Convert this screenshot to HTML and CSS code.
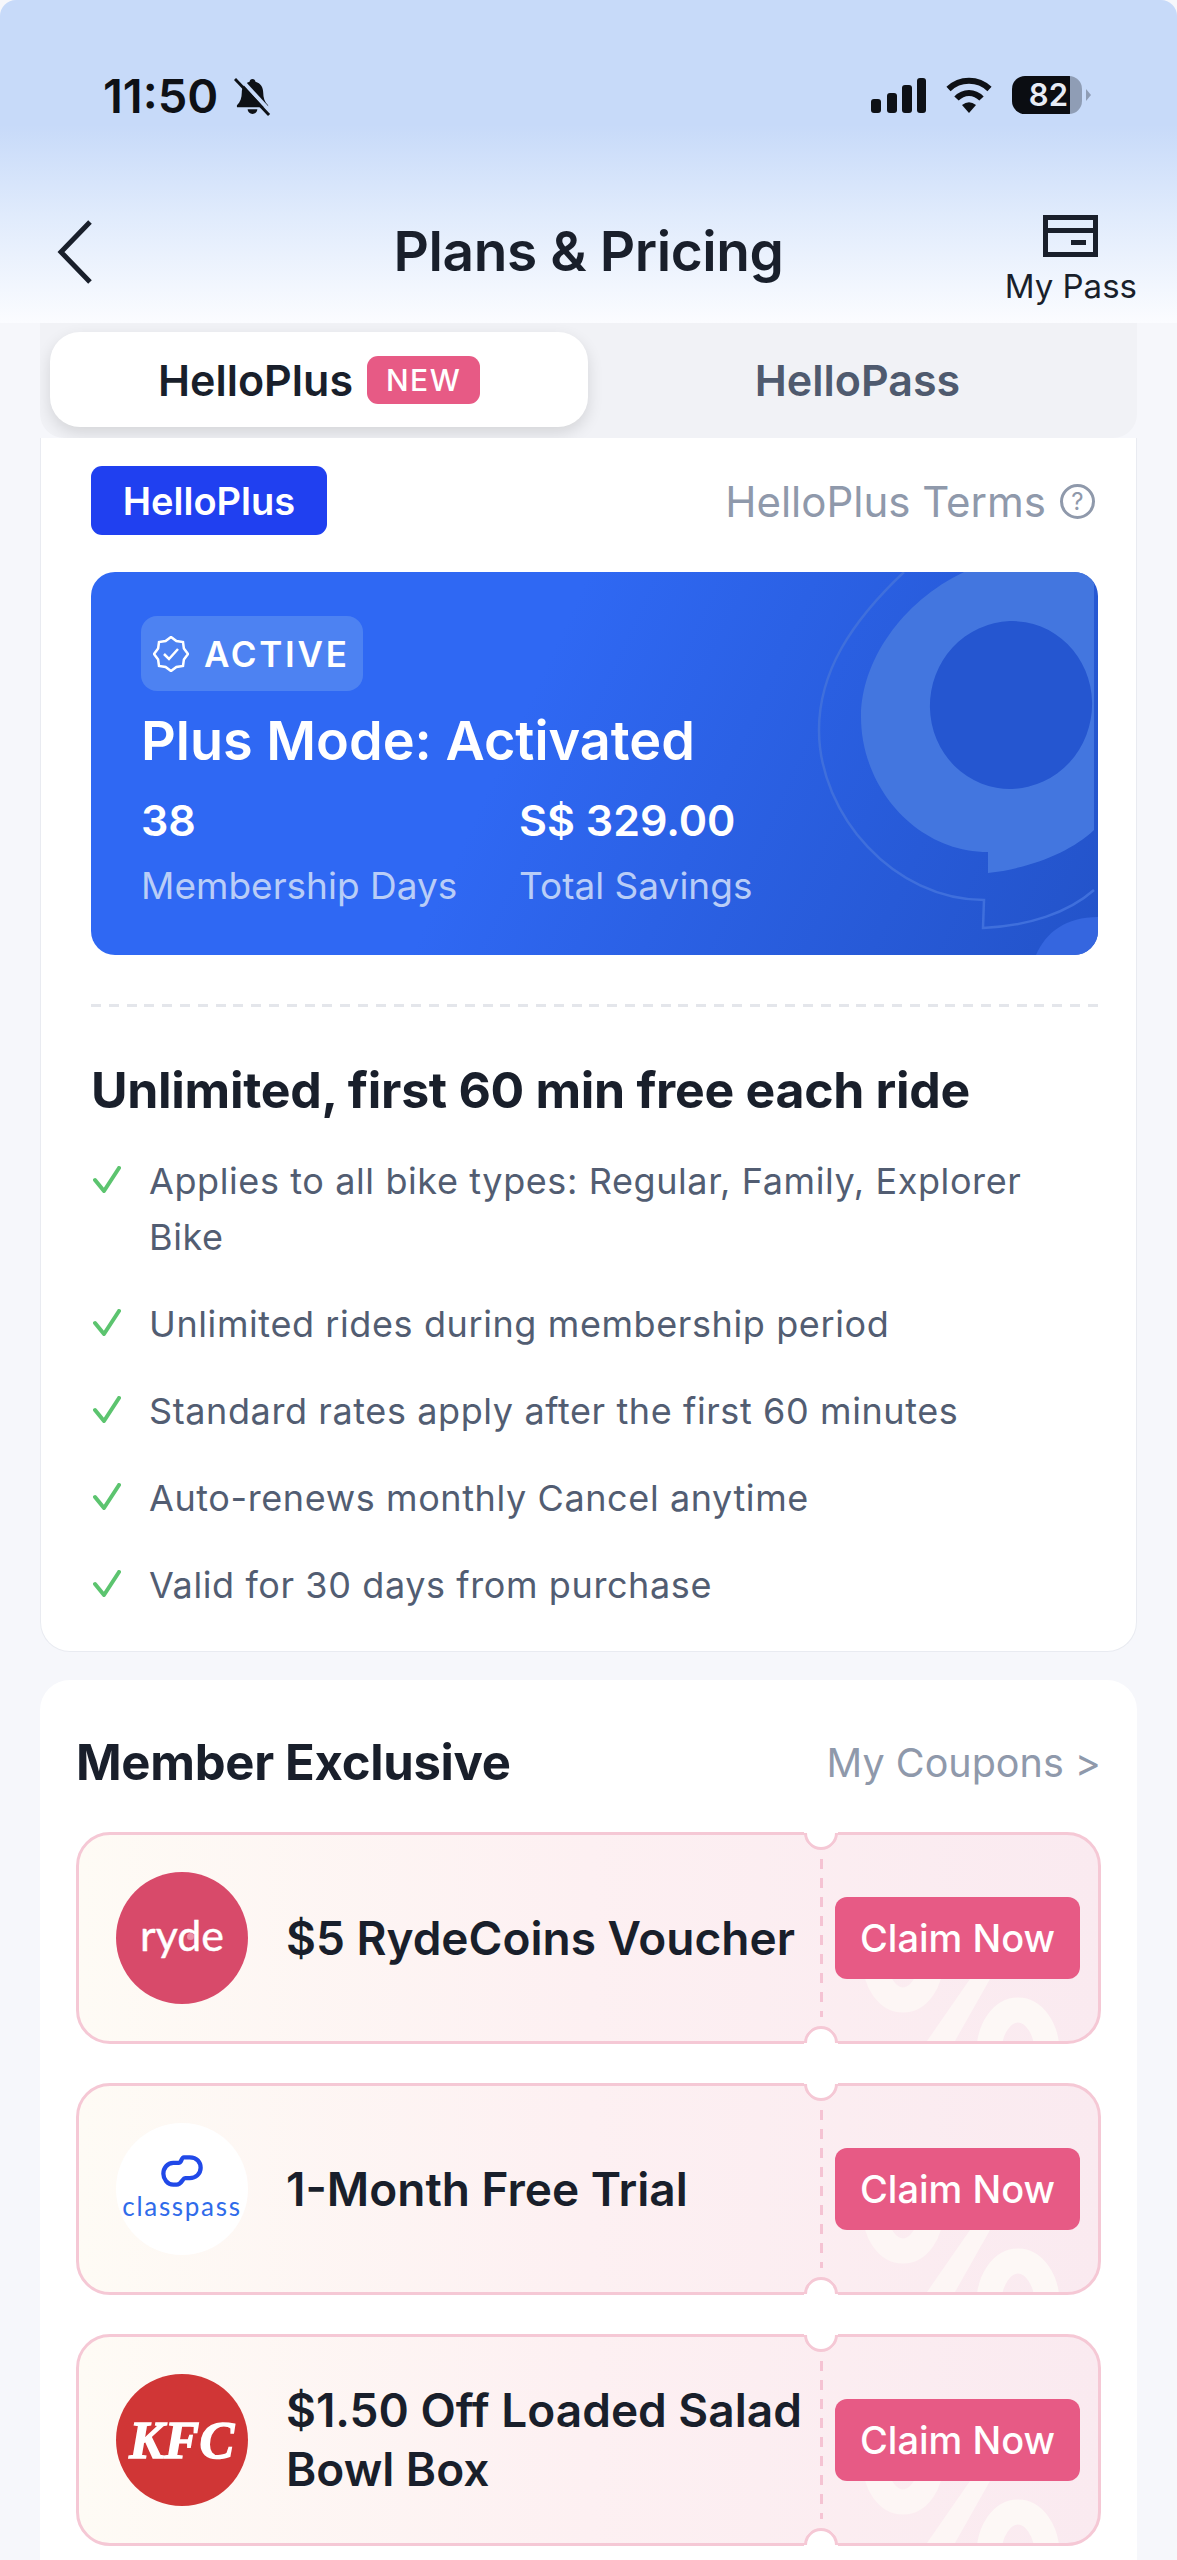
FILE: index.html
```html
<!DOCTYPE html>
<html lang="en">
<head>
<meta charset="utf-8">
<title>Plans &amp; Pricing</title>
<link rel="stylesheet" href="styles.css">
</head>
<body>
<div class="page">
  <header class="top">
    <div class="status">
      <div class="status-left">
        <span class="time">11:50</span>
        <svg class="bell" viewBox="0 0 38 40" width="37" height="39"><path d="M19 2c-1.600 0-3 1.300-3 2.800C10.500 6.300 8 10.500 8 16c0 5.500-1.500 10-5 13v2h32v-2c-3.500-3-5-7.500-5-13 0-5.500-2.500-9.700-8-11.200C22 3.300 20.600 2 19 2z" fill="#0e1116"/><path d="M14 33h10a5 5 0 0 1-10 0z" fill="#0e1116"/><path d="M4 -1l34 37" stroke="#c7daf9" stroke-width="4"/><path d="M1 2l35 37" stroke="#0e1116" stroke-width="3"/></svg>
      </div>
      <div class="status-right">
        <svg viewBox="0 0 55 35" width="55" height="35"><rect x="0" y="21" width="10" height="14" rx="3"/><rect x="16" y="15" width="10" height="20" rx="3"/><rect x="31" y="7" width="10" height="28" rx="3"/><rect x="46" y="0" width="9" height="35" rx="3"/></svg>
        <svg viewBox="0 0 48 36" width="48" height="36"><path d="M3.500 12C15 1 33 1 44.500 12" fill="none" stroke="#0e1116" stroke-width="6"/><path d="M11.500 21.500C18.500 14 29.500 14 36.500 21.500" fill="none" stroke="#0e1116" stroke-width="6"/><path d="M17 28Q24 22.500 31 28L24 36z"/></svg>
        <div class="battery"><span class="battery-level">82</span><span class="battery-nub"></span></div>
      </div>
    </div>
    <nav class="nav">
      <div class="nav-back">
        <svg viewBox="0 0 36 64" width="36" height="64"><path d="M33 2L4 32l29 30" fill="none" stroke="#191f2b" stroke-width="5"/></svg>
      </div>
      <h1 class="title">Plans &amp; Pricing</h1>
      <div class="nav-pass">
        <svg viewBox="0 0 55 42" width="55" height="42"><rect x="2.500" y="2.500" width="50" height="37" fill="none" stroke="#191f2b" stroke-width="5"/><rect x="2" y="13" width="51" height="5" fill="#191f2b"/><rect x="28" y="25" width="15" height="5" fill="#191f2b"/></svg>
        <span class="nav-pass-label">My Pass</span>
      </div>
    </nav>
  </header>

  <div class="tabs">
    <div class="tab tab-active">HelloPlus <span class="new-tag">NEW</span></div>
    <div class="tab tab-idle">HelloPass</div>
  </div>

  <section class="plan">
    <div class="plan-top">
      <span class="plan-badge">HelloPlus</span>
      <span class="terms">HelloPlus Terms <span class="terms-q">?</span></span>
    </div>

    <div class="hero">
      <svg class="hero-art" viewBox="0 0 1007 383" width="1007" height="383">
        <path d="M873 0C810 30 770 90 770 145c0 70 55 135 127 135v21c43-5 83-21 106-43V0z" fill="#4376df"/>
        <ellipse cx="920" cy="133" rx="81" ry="84" transform="rotate(10 920 133)" fill="#2556d0"/>
        <path d="M813 0C760 50 728 100 728 158c0 85 75 170 165 170l-1 28c45-2 85-15 111-38" fill="none" stroke="#3f6fdc" stroke-width="2.500"/>
        <path d="M945 383c10-23 30-38 62-38v38z" fill="#3566df"/>
      </svg>
      <div class="chip">
        <svg viewBox="0 0 36 36" width="36" height="36"><polygon points="35,18 30.900,23.400 30,30 23.400,30.900 18,35 12.600,30.900 6,30 5.100,23.400 1,18 5.100,12.600 6,6 12.600,5.100 18,1 23.400,5.100 30,6 30.900,12.600" fill="none" stroke="#fff" stroke-width="2.500"/><path d="M11 18l5 5 9-10" fill="none" stroke="#fff" stroke-width="2.500"/></svg>
        <span>ACTIVE</span>
      </div>
      <div class="hero-title">Plus Mode: Activated</div>
      <div class="stats">
        <div class="stat stat-days"><div class="stat-value">38</div><div class="stat-label">Membership Days</div></div>
        <div class="stat"><div class="stat-value">S$ 329.00</div><div class="stat-label">Total Savings</div></div>
      </div>
    </div>

    <div class="dashes"></div>

    <h2 class="plan-heading">Unlimited, first 60 min free each ride</h2>
    <ul class="perks">
      <li class="perk"><svg class="tick" viewBox="0 0 28 28" width="28" height="28"><path d="M2 14l9 11L26 2" fill="none" stroke="#5cc46f" stroke-width="4" stroke-linecap="round" stroke-linejoin="round"/></svg><span>Applies to all bike types: Regular, Family, Explorer Bike</span></li>
      <li class="perk"><svg class="tick" viewBox="0 0 28 28" width="28" height="28"><path d="M2 14l9 11L26 2" fill="none" stroke="#5cc46f" stroke-width="4" stroke-linecap="round" stroke-linejoin="round"/></svg><span>Unlimited rides during membership period</span></li>
      <li class="perk"><svg class="tick" viewBox="0 0 28 28" width="28" height="28"><path d="M2 14l9 11L26 2" fill="none" stroke="#5cc46f" stroke-width="4" stroke-linecap="round" stroke-linejoin="round"/></svg><span>Standard rates apply after the first 60 minutes</span></li>
      <li class="perk"><svg class="tick" viewBox="0 0 28 28" width="28" height="28"><path d="M2 14l9 11L26 2" fill="none" stroke="#5cc46f" stroke-width="4" stroke-linecap="round" stroke-linejoin="round"/></svg><span>Auto-renews monthly Cancel anytime</span></li>
      <li class="perk"><svg class="tick" viewBox="0 0 28 28" width="28" height="28"><path d="M2 14l9 11L26 2" fill="none" stroke="#5cc46f" stroke-width="4" stroke-linecap="round" stroke-linejoin="round"/></svg><span>Valid for 30 days from purchase</span></li>
    </ul>
  </section>

  <section class="member">
    <div class="member-head">
      <h2 class="member-title">Member Exclusive</h2>
      <span class="coupons-link">My Coupons &gt;</span>
    </div>
    <div class="coupons">
      <article class="coupon">
        <div class="coupon-art"><svg viewBox="0 0 1019 206" width="1019" height="206"><ellipse cx="824" cy="125" rx="28" ry="40" fill="none" stroke="#fdf6f5" stroke-width="25"/><path d="M891 144h20l-35 62h-28z" fill="#fdf6f5"/><ellipse cx="939" cy="217" rx="29" ry="42" fill="none" stroke="#fdf8f6" stroke-width="25"/></svg></div>
        <span class="notch notch-top"></span><span class="notch notch-bottom"></span><span class="perforation"></span>
        <div class="logo logo-ryde">ryde</div>
        <div class="coupon-text">$5 RydeCoins Voucher</div>
        <button class="claim">Claim Now</button>
      </article>
      <article class="coupon">
        <div class="coupon-art"><svg viewBox="0 0 1019 206" width="1019" height="206"><ellipse cx="824" cy="125" rx="28" ry="40" fill="none" stroke="#fdf6f5" stroke-width="25"/><path d="M891 144h20l-35 62h-28z" fill="#fdf6f5"/><ellipse cx="939" cy="217" rx="29" ry="42" fill="none" stroke="#fdf8f6" stroke-width="25"/></svg></div>
        <span class="notch notch-top"></span><span class="notch notch-bottom"></span><span class="perforation"></span>
        <div class="logo logo-classpass">
          <svg viewBox="153 108 127 97" width="42" height="32"><path d="M222 115H240C262 115 273 130 273 147C273 165 258 178 240 178H226C218 178 216 198 200 198H190C172 198 160 180 160 165C160 148 172 132 190 132H206C216 132 214 115 222 115Z" fill="none" stroke="#2149e8" stroke-width="13"/></svg>
          <span>classpass</span>
        </div>
        <div class="coupon-text">1-Month Free Trial</div>
        <button class="claim">Claim Now</button>
      </article>
      <article class="coupon">
        <div class="coupon-art"><svg viewBox="0 0 1019 206" width="1019" height="206"><ellipse cx="824" cy="125" rx="28" ry="40" fill="none" stroke="#fdf6f5" stroke-width="25"/><path d="M891 144h20l-35 62h-28z" fill="#fdf6f5"/><ellipse cx="939" cy="217" rx="29" ry="42" fill="none" stroke="#fdf8f6" stroke-width="25"/></svg></div>
        <span class="notch notch-top"></span><span class="notch notch-bottom"></span><span class="perforation"></span>
        <div class="logo logo-kfc">KFC</div>
        <div class="coupon-text">$1.50 Off Loaded Salad Bowl Box</div>
        <button class="claim">Claim Now</button>
      </article>
    </div>
  </section>
</div>
</body>
</html>
```

FILE: styles.css
```css
* { box-sizing: border-box; }
html, body { margin: 0; padding: 0; }
body { background: #f6f7fb; font-family: Inter, "Noto Sans", sans-serif; color: #191f2b; }
.page { width: 1177px; height: 2560px; overflow: hidden; }

.top { height: 323px; background: linear-gradient(180deg, #c7daf9 0, #c7daf9 125px, #e0ebfc 215px, #fbfcff 323px); border-radius: 16px 16px 0 0; }
.status { height: 190px; padding: 76px 95px 0 103px; display: flex; justify-content: space-between; align-items: flex-start; }
.status-left { display: flex; align-items: center; gap: 16px; }
.time { font-size: 47px; font-weight: 600; line-height: 40px; color: #0e1116; }
.status-right { display: flex; align-items: center; gap: 19px; height: 38px; }
.status-right svg { fill: #0e1116; }
.battery { position: relative; width: 70px; height: 38px; border-radius: 13px; background: linear-gradient(90deg, #0b0d12 0, #0b0d12 83%, #8f9db5 83%); color: #e8ecf5; font-size: 31px; font-weight: 600; line-height: 38px; padding-right: 14px; text-align: right; }
.battery-nub { position: absolute; right: -9px; top: 13px; width: 5px; height: 12px; background: #8f9db5; clip-path: polygon(0 0, 100% 50%, 0 100%); }

.nav { height: 133px; display: grid; grid-template-columns: 1fr auto 1fr; }
.nav-back { padding: 30px 0 0 57px; }
.title { margin: 0; font-size: 55px; font-weight: 600; line-height: 66px; padding-top: 28px; letter-spacing: -0.4px; }
.nav-pass { justify-self: end; display: flex; flex-direction: column; align-items: center; padding: 25px 40px 0 0; }
.nav-pass svg { display: block; }
.nav-pass-label { font-size: 33px; line-height: 40px; margin-top: 9px; }

.tabs { height: 115px; margin: 0 40px; padding: 9px 10px 11px; background: #f1f2f6; display: flex; border-radius: 0 0 24px 24px; overflow: hidden; }
.tab { font-size: 43px; font-weight: 600; display: flex; align-items: center; justify-content: center; }
.tab-active { width: 538px; background: #fff; border-radius: 30px; box-shadow: 0 6px 16px rgba(0, 0, 0, .12); gap: 14px; }
.tab-idle { flex: 1; color: #4f5a6e; }
.new-tag { width: 113px; height: 48px; border-radius: 11px; background: #e75a85; color: #fff; font-size: 30px; font-weight: 500; letter-spacing: 1.5px; display: flex; align-items: center; justify-content: center; }

.plan { position: relative; margin: 0 40px; height: 1214px; background: #fff; border: 1px solid #e9ebf1; border-top: 0; border-radius: 0 0 30px 30px; padding: 28px 38px 0 50px; }
.plan-top { display: flex; justify-content: space-between; align-items: center; height: 69px; }
.plan-badge { width: 236px; height: 69px; background: #2040f0; border-radius: 11px; color: #fff; font-size: 38px; font-weight: 600; display: flex; align-items: center; justify-content: center; }
.terms { font-size: 42px; color: #8f99ab; display: flex; align-items: center; gap: 14px; margin-top: 1px; padding-right: 3px; }
.terms-q { width: 35px; height: 35px; border: 3px solid #8f99ab; border-radius: 50%; font-size: 24px; line-height: 29px; text-align: center; }

.hero { position: relative; margin-top: 37px; height: 383px; border-radius: 24px; overflow: hidden; background: linear-gradient(115deg, #2f68f3 0, #2f68f3 42%, #2353c9 100%); padding: 44px 0 0 50px; color: #fff; }
.hero-art { position: absolute; left: 0; top: 0; }
.chip { position: relative; width: 222px; height: 75px; border-radius: 16px; background: #4d82f2; display: flex; align-items: center; padding-left: 12px; gap: 15px; font-size: 35px; font-weight: 600; letter-spacing: 2.7px; }
.hero-title { position: relative; margin-top: 18px; font-size: 54px; font-weight: 600; line-height: 64px; }
.stats { position: relative; display: flex; margin-top: 21px; }
.stat-days { width: 378px; }
.stat-value { font-size: 43px; font-weight: 600; line-height: 52px; }
.stat-label { font-size: 37px; line-height: 46px; margin-top: 17px; color: #b9cdf7; }

.dashes { margin-top: 49px; height: 3px; background: repeating-linear-gradient(90deg, #e4e6eb 0, #e4e6eb 10px, transparent 10px, transparent 17.8px); }

.plan-heading { margin: 50px 0 0; font-size: 50px; font-weight: 700; line-height: 66px; letter-spacing: -0.3px; }
.perks { list-style: none; margin: 30px 0 0; padding: 0; display: flex; flex-direction: column; gap: 31px; }
.perk { display: flex; font-size: 36px; line-height: 56px; color: #525d72; letter-spacing: 0.6px; }
.tick { flex: none; margin: 13px 28px 0 2px; }

.member { margin: 28px 40px 0; height: 900px; background: #fff; border-radius: 30px 30px 0 0; padding: 0 36px; }
.member-head { height: 152px; padding-top: 50px; display: flex; justify-content: space-between; align-items: flex-start; }
.member-title { margin: 0; font-size: 49px; font-weight: 700; line-height: 66px; letter-spacing: -0.3px; }
.coupons-link { font-size: 39.500px; line-height: 66px; color: #8f99ab; }

.coupons { display: flex; flex-direction: column; gap: 39px; }
.coupon { position: relative; height: 212px; border: 3px solid #f5c8d5; border-radius: 34px; background: linear-gradient(90deg, #fefbf5 0, #fdf0f2 50%, #faeaf0 100%); display: flex; align-items: center; padding: 0 18px 0 37px; }
.coupon-art { position: absolute; inset: 0; overflow: hidden; border-radius: 31px; }
.coupon-art svg { display: block; }
.notch { position: absolute; left: 725px; width: 34px; height: 34px; border-radius: 50%; background: #fff; border: 3px solid #fff; border-left-color: #f5c8d5; border-bottom-color: #f5c8d5; }
.notch-top { top: -19px; transform: rotate(-45deg); }
.notch-bottom { bottom: -19px; transform: rotate(135deg); }
.perforation { position: absolute; left: 741px; top: 24px; bottom: 24px; width: 3px; background: repeating-linear-gradient(180deg, #f5c3d3 0, #f5c3d3 10px, transparent 10px, transparent 19px); }
.logo { position: relative; flex: none; width: 132px; height: 132px; border-radius: 50%; margin-right: 38px; display: flex; align-items: center; justify-content: center; }
.logo-ryde { background: #d84a6a; color: #fff; font-family: Lato, sans-serif; font-size: 43px; padding-bottom: 8px; -webkit-text-stroke: 0.4px #fff; }
.logo-ryde::after { content: ""; position: absolute; left: 71px; top: 61px; width: 7px; height: 7px; border-radius: 50%; background: #ea8fa6; }
.logo-classpass { background: #fff; flex-direction: column; color: #2f6bea; font-size: 26px; line-height: 30px; font-family: Lato, sans-serif; letter-spacing: 1.700px; padding-bottom: 2px; }
.logo-classpass svg { margin-bottom: 4px; }
.logo-kfc { background: #d03636; color: #fff; font-family: "Liberation Serif", serif; font-style: italic; font-weight: 700; font-size: 52px; letter-spacing: 0.5px; -webkit-text-stroke: 1.500px #fff; }
.coupon-text { position: relative; flex: 1; font-size: 46px; font-weight: 600; line-height: 59px; padding-right: 16px; }
.claim { position: relative; flex: none; width: 245px; height: 82px; border: 0; border-radius: 12px; background: #e75a85; color: #fff; font-family: inherit; font-size: 38px; font-weight: 500; padding: 0; }
```
